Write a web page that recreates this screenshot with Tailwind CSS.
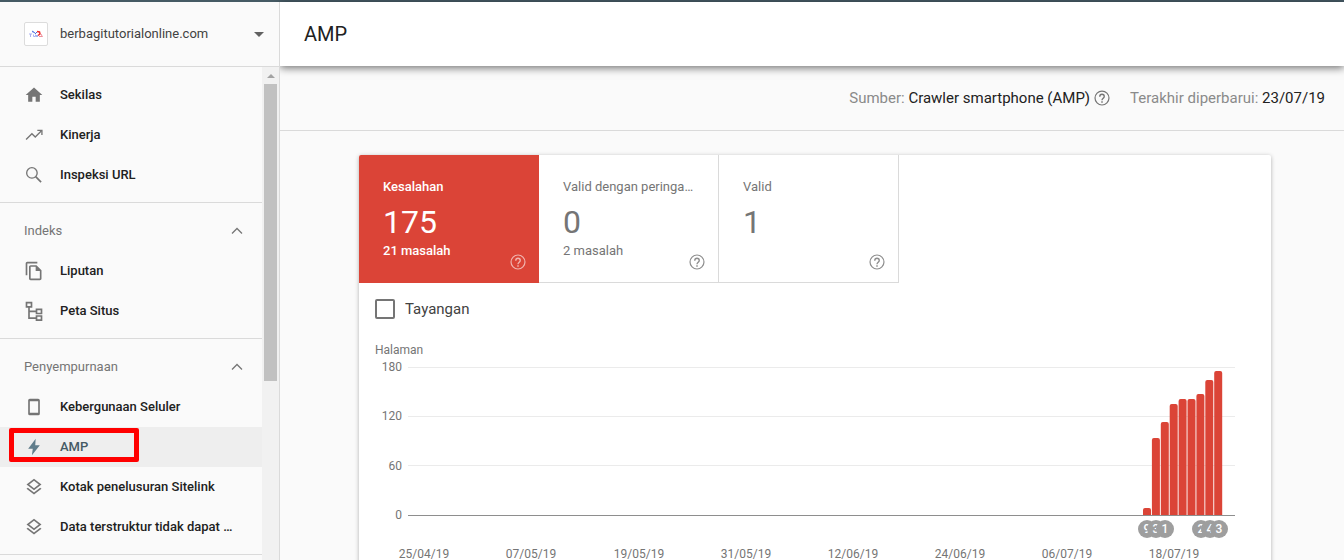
<!DOCTYPE html>
<html lang="id">
<head>
<meta charset="utf-8">
<title>AMP</title>
<script src="https://cdn.jsdelivr.net/npm/@tailwindcss/browser@4"></script>
</head>
<body class="h-screen overflow-hidden bg-[#fafafa] font-['Roboto',sans-serif] text-[13px] text-[#212121]">
<svg class="hidden">
  <symbol id="help" viewBox="0 0 24 24"><circle cx="12" cy="12" r="9.300" fill="none" stroke="currentColor" stroke-width="1.600"/><path fill="none" stroke="currentColor" stroke-width="1.800" d="M9 10.200c0-1.900 1.200-3.200 3-3.200s3 1.200 3 2.900c0 2.300-3 2.500-3 5.200"/><path fill="currentColor" d="M11 16.200h2v2h-2z"/></symbol>
  <symbol id="up" viewBox="0 0 24 24"><path d="M6 15l6-6 6 6" fill="none" stroke="currentColor" stroke-width="1.500"/></symbol>
  <symbol id="layers" viewBox="0 0 24 24"><path d="M11.990 18.540l-7.370-5.730L3 14.070l9 7 9-7-1.630-1.270-7.380 5.740zM12 16l7.360-5.730L21 9l-9-7-9 7 1.630 1.270L12 16zm0-11.470L17.740 9 12 13.470 6.260 9 12 4.530z"/></symbol>
</svg>
<div class="flex h-full flex-col border-t-2 border-[#455a64]">
  <div class="flex min-h-0 flex-1">
    <aside class="z-10 flex w-[280px] shrink-0 flex-col border-r border-[#dadada] bg-[#fafafa]">
      <button type="button" class="flex h-[65px] shrink-0 items-center border-b border-[#dadada] pl-6 pr-[15px] text-left text-[#424242]">
        <span class="flex size-6 items-center justify-center rounded-xs border border-[#dcdcdc] bg-white">
          <svg class="h-2 w-4" viewBox="0 0 16 8" fill="none"><path stroke="#a9b0f2" d="M1 4h3M2.500 4v3M5 1v2M5.500 4.500v2h2v-2"/><path stroke="#4a6fe0" d="M4 1l3 2M7 4l2-2M8 6h2"/><path stroke="#f02c2c" stroke-width="1.500" d="M9 1.500l2.500.5L12 4l-2 1.500"/><path stroke="#ef8f9b" d="M11 6.500h3M13 4l1.500 3"/></svg>
        </span>
        <span class="ml-3 flex-1">berbagitutorialonline.com</span>
        <svg class="h-[5px] w-[10px]" viewBox="0 0 10 5"><path fill="#616161" d="M0 0h10L5 5z"/></svg>
      </button>
      <div class="flex min-h-0 flex-1">
        <nav class="min-w-0 flex-1 overflow-hidden font-medium">
          <div class="border-b border-[#dadada] pb-[7px] pt-2">
            <a href="#" class="flex h-10 items-center gap-4 px-6"><svg class="size-5 shrink-0 fill-[#757575]" viewBox="0 0 24 24"><path d="M10 20v-6h4v6h5v-8h3L12 3 2 12h3v8z"/></svg>Sekilas</a>
            <a href="#" class="flex h-10 items-center gap-4 px-6"><svg class="size-5 shrink-0 fill-none stroke-[#757575]" viewBox="0 0 24 24"><path stroke-width="1.600" d="M2.500 17.500l7-7 4 4L21 7"/><path stroke-width="1.600" d="M16 6.500h5.500V12"/></svg>Kinerja</a>
            <a href="#" class="flex h-10 items-center gap-4 px-6"><svg class="size-5 shrink-0 fill-none stroke-[#757575]" viewBox="0 0 24 24"><circle cx="9.500" cy="9.500" r="6.300" stroke-width="1.600"/><path stroke-width="2" d="M14 14l6.500 6.500"/></svg>Inspeksi URL</a>
          </div>
          <div class="border-b border-[#dadada] pb-[7px] pt-2">
            <button type="button" class="flex h-10 w-full items-center justify-between pl-6 pr-[15px] font-normal text-[#757575]">Indeks<svg class="size-5" viewBox="0 0 24 24"><use href="#up"/></svg></button>
            <a href="#" class="flex h-10 items-center gap-4 px-6"><svg class="size-5 shrink-0 fill-[#757575]" viewBox="0 0 24 24"><path d="M16 1H4c-1.100 0-2 .9-2 2v14h2V3h12V1zm-1 4H8c-1.100 0-1.990.9-1.990 2L6 21c0 1.100.89 2 1.990 2H19c1.100 0 2-.9 2-2V11l-6-6zM8 21V7h6v5h5v9H8z"/></svg>Liputan</a>
            <a href="#" class="flex h-10 items-center gap-4 px-6"><svg class="size-5 shrink-0 fill-none stroke-[#757575]" viewBox="0 0 24 24" stroke-width="2"><path d="M3 2h6v5H3zM15 10h6v5h-6zM15 18h6v5h-6zM6 7v13.500h9M6 12.500h9"/></svg>Peta Situs</a>
          </div>
          <div class="border-b border-[#dadada] pb-[7px] pt-2">
            <button type="button" class="flex h-10 w-full items-center justify-between pl-6 pr-[15px] font-normal text-[#757575]">Penyempurnaan<svg class="size-5" viewBox="0 0 24 24"><use href="#up"/></svg></button>
            <a href="#" class="flex h-10 items-center gap-4 px-6"><svg class="size-5 shrink-0 fill-none stroke-[#757575]" viewBox="0 0 24 24"><rect x="6" y="3" width="12" height="18" rx="1" stroke-width="2"/><path d="M6 4h12M6 20h12" stroke-width="2"/></svg>Kebergunaan Seluler</a>
            <a href="#" class="relative flex h-10 items-center gap-4 bg-[#eeeeee] px-6 text-[#455a64]"><svg class="size-5 shrink-0 fill-[#607d8b]" viewBox="0 0 24 24"><path d="M14 2L5 14h5.500L9.500 22 19 10h-5.500z"/></svg>AMP<span class="absolute left-[9px] top-px h-[34px] w-[130px] rounded-xs border-[5px] border-[#ff0000]"></span></a>
            <a href="#" class="flex h-10 items-center gap-4 px-6"><svg class="size-5 shrink-0 fill-[#757575]" viewBox="0 0 24 24"><use href="#layers"/></svg>Kotak penelusuran Sitelink</a>
            <a href="#" class="flex h-10 items-center gap-4 px-6"><svg class="size-5 shrink-0 fill-[#757575]" viewBox="0 0 24 24"><use href="#layers"/></svg>Data terstruktur tidak dapat …</a>
          </div>
        </nav>
        <div class="flex w-[17px] shrink-0 flex-col items-center bg-[#f1f1f1]">
          <svg class="h-[17px] w-2 shrink-0" viewBox="0 0 8 17"><path fill="#a3a3a3" d="M0 11l4-4 4 4z"/></svg>
          <div class="h-[297px] w-[13px] bg-[#c1c1c1]"></div>
        </div>
      </div>
    </aside>
    <main class="min-w-0 flex-1">
      <header class="flex h-16 items-center bg-white px-6 shadow-[0_2px_8px_rgba(0,0,0,0.55)]"><h1 class="text-xl">AMP</h1></header>
      <div class="flex h-[65px] items-center justify-end border-b border-[#dadada] pr-[19px] text-[15px] text-[#8a8a8a]">
        <span>Sumber: <span class="text-[#212121]">Crawler smartphone (AMP)</span></span>
        <button type="button" aria-label="Bantuan sumber" class="ml-[3px] mr-[19px] text-[#757575]"><svg class="size-[18px]" viewBox="0 0 24 24"><use href="#help"/></svg></button>
        <span>Terakhir diperbarui: <span class="text-[#212121]">23/07/19</span></span>
      </div>
      <div class="pl-1.5 pt-6">
        <section class="mx-auto w-full max-w-[912px] rounded-xs bg-white shadow-[0_1px_4px_rgba(0,0,0,0.3)]">
          <div class="flex text-[#757575]">
            <button type="button" class="relative h-32 w-[180px] rounded-tl-xs bg-[#db4437] px-6 text-left text-white">
              <span class="block font-medium leading-4">Kesalahan</span><span class="block pb-px pt-[7px] text-[32px] leading-10">175</span><span class="block font-medium leading-4">21 masalah</span>
              <svg class="absolute bottom-3 right-3 size-[18px] text-white/60" viewBox="0 0 24 24"><use href="#help"/></svg>
            </button>
            <button type="button" class="relative h-32 w-[180px] border-b border-r border-[#dadada] pl-6 text-left">
              <span class="block leading-4">Valid dengan peringa…</span><span class="block pb-px pt-[7px] text-[32px] leading-10">0</span><span class="block leading-4">2 masalah</span>
              <svg class="absolute bottom-[11px] right-3 size-[18px] text-[#8e8e8e]" viewBox="0 0 24 24"><use href="#help"/></svg>
            </button>
            <button type="button" class="relative h-32 w-[180px] border-b border-r border-[#dadada] pl-6 text-left">
              <span class="block leading-4">Valid</span><span class="block pb-px pt-[7px] text-[32px] leading-10">1</span><span class="block h-4"></span>
              <svg class="absolute bottom-[11px] right-3 size-[18px] text-[#8e8e8e]" viewBox="0 0 24 24"><use href="#help"/></svg>
            </button>
          </div>
          <label class="flex h-[52px] items-center gap-2.5 px-4 text-[15px] text-[#424242]"><input type="checkbox" class="size-5 appearance-none rounded-xs border-2 border-[#757575]">Tayangan</label>
          <svg class="block w-full" viewBox="0 0 912 240" font-size="12" fill="#757575">
            <path d="M49 32.500H876M49 81.500H876M49 130.500H876" stroke="#ebebeb"/>
            <text x="16" y="19">Halaman</text>
            <g text-anchor="end"><text x="43" y="36">180</text><text x="43" y="85">120</text><text x="43" y="135">60</text><text x="43" y="184">0</text></g>
            <g fill="#db4437">
              <path d="M784 180v-5q0-2 2-2h4q2 0 2 2v5z"/>
              <path d="M792.900 180v-75q0-2 2-2h4q2 0 2 2v75z"/>
              <path d="M801.800 180v-91q0-2 2-2h4q2 0 2 2v91z"/>
              <path d="M810.700 180v-109q0-2 2-2h4q2 0 2 2v109z"/>
              <path d="M819.600 180v-114q0-2 2-2h4q2 0 2 2v114z"/>
              <path d="M828.500 180v-114q0-2 2-2h4q2 0 2 2v114z"/>
              <path d="M837.400 180v-119q0-2 2-2h4q2 0 2 2v119z"/>
              <path d="M846.300 180v-133q0-2 2-2h4q2 0 2 2v133z"/>
              <path d="M855.200 180v-142q0-2 2-2h4q2 0 2 2v142z"/>
            </g>
            <path d="M49 180.500H876" stroke="#8e8e8e"/>
            <g text-anchor="middle" font-weight="500">
              <circle cx="788" cy="194" r="9" fill="#9e9e9e"/><text x="788" y="198" fill="#fff">9</text>
              <circle cx="797" cy="194" r="9" fill="#9e9e9e"/><text x="797" y="198" fill="#fff">3</text>
              <circle cx="806" cy="194" r="9" fill="#9e9e9e"/><text x="806" y="198" fill="#fff">1</text>
              <circle cx="842" cy="194" r="9" fill="#9e9e9e"/><text x="842" y="198" fill="#fff">2</text>
              <circle cx="851" cy="194" r="9" fill="#9e9e9e"/><text x="851" y="198" fill="#fff">4</text>
              <circle cx="860" cy="194" r="9" fill="#9e9e9e"/><text x="860" y="198" fill="#fff">3</text>
            </g>
            <g text-anchor="middle">
              <text x="65" y="223">25/04/19</text><text x="172" y="223">07/05/19</text><text x="280" y="223">19/05/19</text><text x="387" y="223">31/05/19</text><text x="494" y="223">12/06/19</text><text x="601" y="223">24/06/19</text><text x="708" y="223">06/07/19</text><text x="815" y="223">18/07/19</text>
            </g>
          </svg>
        </section>
      </div>
    </main>
  </div>
</div>
</body>
</html>
